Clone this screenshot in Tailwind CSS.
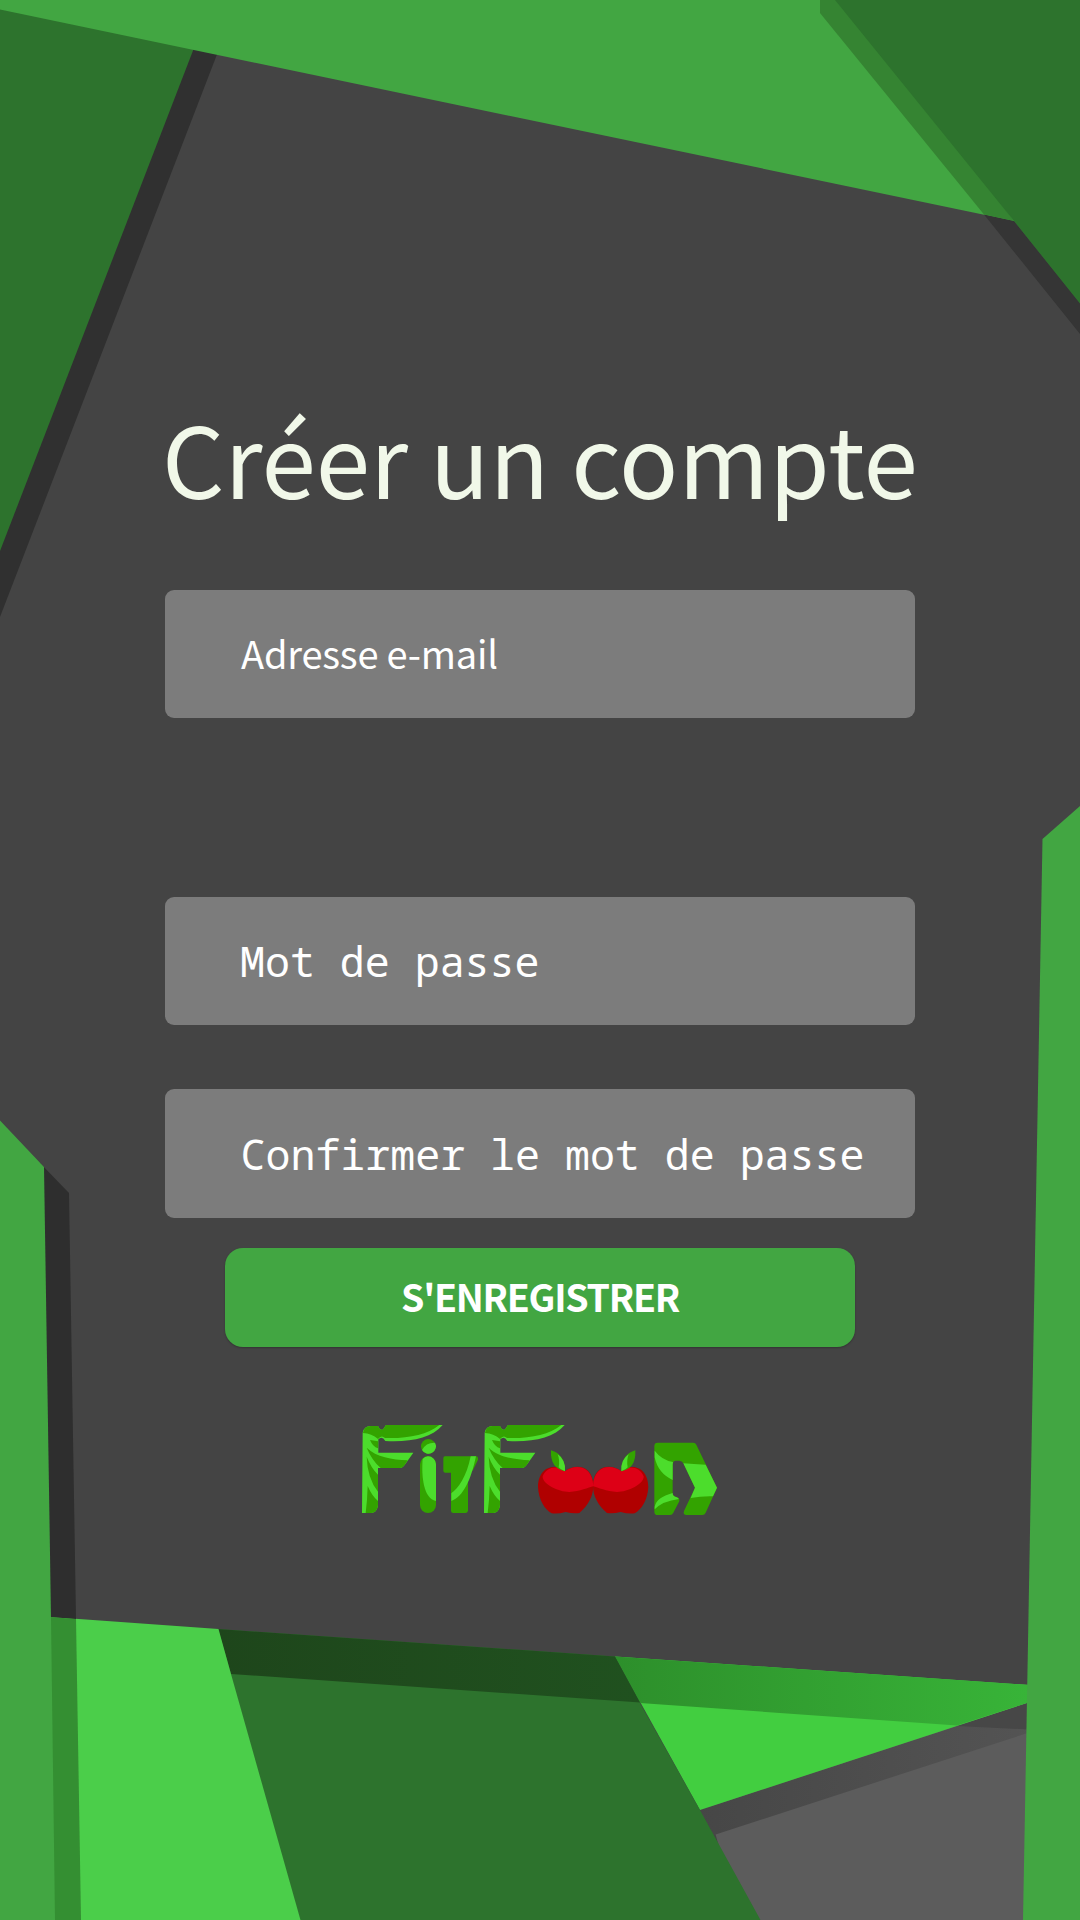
<!DOCTYPE html>
<html lang="fr">
<head>
<meta charset="utf-8">
<title>FitFood</title>
<script src="https://cdn.jsdelivr.net/npm/@tailwindcss/browser@4"></script>
</head>
<body class="bg-[#444444]">
<div class="relative w-[1080px] h-[1920px] overflow-hidden bg-[#444444]">
  <!-- Background shapes -->
  <svg class="absolute inset-0" width="1080" height="1920" viewBox="0 0 1080 1920" aria-hidden="true">
    <defs>
      <linearGradient id="g1" x1="0" x2="1"><stop offset="0" stop-color="#1e461b"/><stop offset="1" stop-color="#20511f"/></linearGradient>
      <linearGradient id="g2" x1="0" x2="1"><stop offset="0" stop-color="#2d8f2b"/><stop offset="1" stop-color="#38b438"/></linearGradient>
      <linearGradient id="g3" x1="0" x2="1"><stop offset="0" stop-color="#464646"/><stop offset="1" stop-color="#545454"/></linearGradient>
    </defs>
    <path fill="#303030" d="M0 0H238L0 617z"/>
    <path fill="#2d732d" d="M0 0H212.500L0 551z"/>
    <path fill="#42a642" d="M0 0H1080V221H1014L0 9.500z"/>
    <path fill="#444444" d="M1014 221L1080 221V303z"/>
    <path fill="#353535" d="M984 214.500L1014 221 1080 303V334z"/>
    <path fill="#358432" d="M820 0V13L984 214.500 1014 221 850 0z"/>
    <path fill="#2d732d" d="M835 0H1080V303.500L1014 221z"/>
    <path fill="#5c5c5c" d="M700 1780L1040 1690V1920H740z"/>
    <path fill="url(#g3)" d="M690 1813L1040 1699V1729L705 1838z"/>
    <path fill="#474747" d="M957 1726L1030 1702V1729.500z"/>
    <path fill="#42ce40" d="M615 1656.500L1030 1685V1702L700 1810z"/>
    <path fill="url(#g2)" d="M615 1656.500L1030 1685V1702L957 1725.500 640 1703z"/>
    <path fill="#2d732d" d="M218 1629L615 1656.500 640 1703 700 1810 760.500 1920H300z"/>
    <path fill="url(#g1)" d="M218 1629L615 1656.500 640 1702.500 231 1674z"/>
    <path fill="#4bce4a" d="M51 1617L218.500 1629 231 1674 300.500 1920H50z"/>
    <path fill="#2e2e2e" d="M40 1163L69 1193 76 1619 50 1617z"/>
    <path fill="#348f32" d="M50 1617L76 1619 81 1920H50z"/>
    <path fill="#42a642" d="M0 1120.500L44 1167 51 1618 55 1920H0z"/>
    <path fill="#42a642" d="M1080 806L1042.500 839 1023 1920H1080z"/>
  </svg>

  <main class="relative flex flex-col items-center pt-[381px]">
    <h1 class="h-[209px] w-[750px] whitespace-nowrap text-[98px] leading-[150px] text-[#f1f8e9] font-['Noto_Sans_CJK_SC',sans-serif]"><span class="-ml-[3px]">Créer un compte</span></h1>
    <label class="flex h-[128px] w-[750px] items-center rounded-[9px] bg-[#7c7c7c] pl-[76px] pb-[3px] text-[38px] tracking-[-0.2px] text-white font-['Noto_Sans_CJK_SC',sans-serif]"><span>Adresse e-mail</span></label>
    <label class="mt-[179px] flex h-[128px] w-[750px] items-center rounded-[9px] bg-[#7c7c7c] pl-[75px] text-[41.600px] text-white font-['Droid_Sans_Mono','Noto_Sans_Mono','DejaVu_Sans_Mono',monospace]"><span>Mot de passe</span></label>
    <label class="mt-[64px] flex h-[129px] w-[750px] items-center rounded-[9px] bg-[#7c7c7c] pl-[75.500px] pt-[2px] text-[41.600px] whitespace-nowrap text-white font-['Droid_Sans_Mono','Noto_Sans_Mono','DejaVu_Sans_Mono',monospace]"><span>Confirmer le mot de passe</span></label>
    <button class="mt-[30px] h-[99px] w-[630px] rounded-[18px] bg-[#42a642] pb-[3px] text-[37.500px] tracking-[-1.3px] font-bold text-white shadow-[0_1px_2px_#00000040] font-['Noto_Sans_CJK_SC',sans-serif]">S'ENREGISTRER</button>
    <!-- FitFood logo -->
    <svg class="mt-[63px]" width="380" height="120" viewBox="0 0 1140 360" role="img" aria-label="FitFood">
      <defs>
        <g id="leafF">
          <path fill="#4cdd2c" d="M38 68Q42 48 62 48H84Q92 65 100 57L108 45H278C245 85 180 97 106 93Q96 76 85 88V128H190L166 162Q158 174 150 174H84V285Q82 307 64 309H36z"/>
          <path fill="#33a300" d="M39 69Q42 48 62 48H84Q92 65 100 57L108 45H268C230 75 175 86 105 84Q94 73 84 87Q65 70 39 69z"/>
          <path fill="#33a300" d="M60 90L84 94V115Q68 110 60 90z"/>
          <path fill="#33a300" d="M50 113C80 142 125 148 173 151L166 162Q158 174 150 174H92Q65 150 50 113z"/>
          <path fill="#33a300" d="M50 140Q64 175 84 194V245Q52 205 50 140z"/>
          <path fill="#33a300" d="M53 228Q66 258 84 273V285Q82 307 64 309H47Q52 270 53 228z"/>
        </g>
        <g id="apple">
          <path fill="#b00000" d="M105 184C80 160 25 165 24 232C26 270 45 300 65 310Q85 312 107 306Q130 312 148 309C175 285 190 260 190 225C188 165 135 160 105 184z"/>
          <path fill="#dd0016" d="M38 199C36 222 85 246 118 246C150 245 175 232 190 229C188 165 135 160 105 184C85 165 50 168 38 199z"/>
          <path fill="#33a300" d="M63 121Q105 133 105 184Q60 175 63 121z"/>
          <path fill="#4cdd2c" d="M83 133Q108 150 105 184Q90 178 86 172Q90 150 83 133z"/>
        </g>
      </defs>
      <use href="#leafF"/>
      <use href="#leafF" x="366"/>
      <circle cx="235" cy="109" r="22" fill="#33a300"/>
      <path fill="#4cdd2c" d="M216 120Q228 97 255 98A22 22 0 0 1 216 120z"/>
      <rect x="210" y="139" width="48" height="170" rx="24" fill="#33a300"/>
      <path fill="#4cdd2c" d="M218 147Q224 139 234 139A24 24 0 0 1 258 163V273C220 265 214 200 218 147z"/>
      <path fill="#33a300" d="M285 139H379Q385 140 384 149L369 180Q364 188 354 188V302Q353 309 346 309H310Q303 309 303 302V188H286Q280 188 280 182V145Q280 139 285 139z"/>
      <path fill="#4cdd2c" d="M362 139C350 200 325 235 304 250V273C340 260 363 210 378 139z"/>
      <use href="#apple" x="540"/>
      <use href="#apple" transform="matrix(-1 0 0 1 919 0)"/>
      <g transform="translate(540 0)">
        <path fill="#33a300" d="M373 108Q373 98 383 98H490Q496 98 499 104L561 233L527 308Q524 315 517 315H470Q458 315 462 303L495 233L460 160Q456 152 448 152H438Q428 152 428 165V250Q428 258 436 260Q450 262 448 274L430 308Q427 315 420 315H383Q373 315 373 305z"/>
        <path fill="#4cdd2c" d="M374 122Q395 150 429 156L428 164V210Q384 190 374 142z"/>
        <path fill="#4cdd2c" d="M460 160Q490 163 527 164L561 233L549 259Q515 258 482 264L495 233z"/>
        <path fill="#4cdd2c" d="M374 290Q380 262 428 249Q428 258 436 260Q442 261 447 267Q398 273 374 298z"/>
      </g>
    </svg>
  </main>
</div>
</body>
</html>
